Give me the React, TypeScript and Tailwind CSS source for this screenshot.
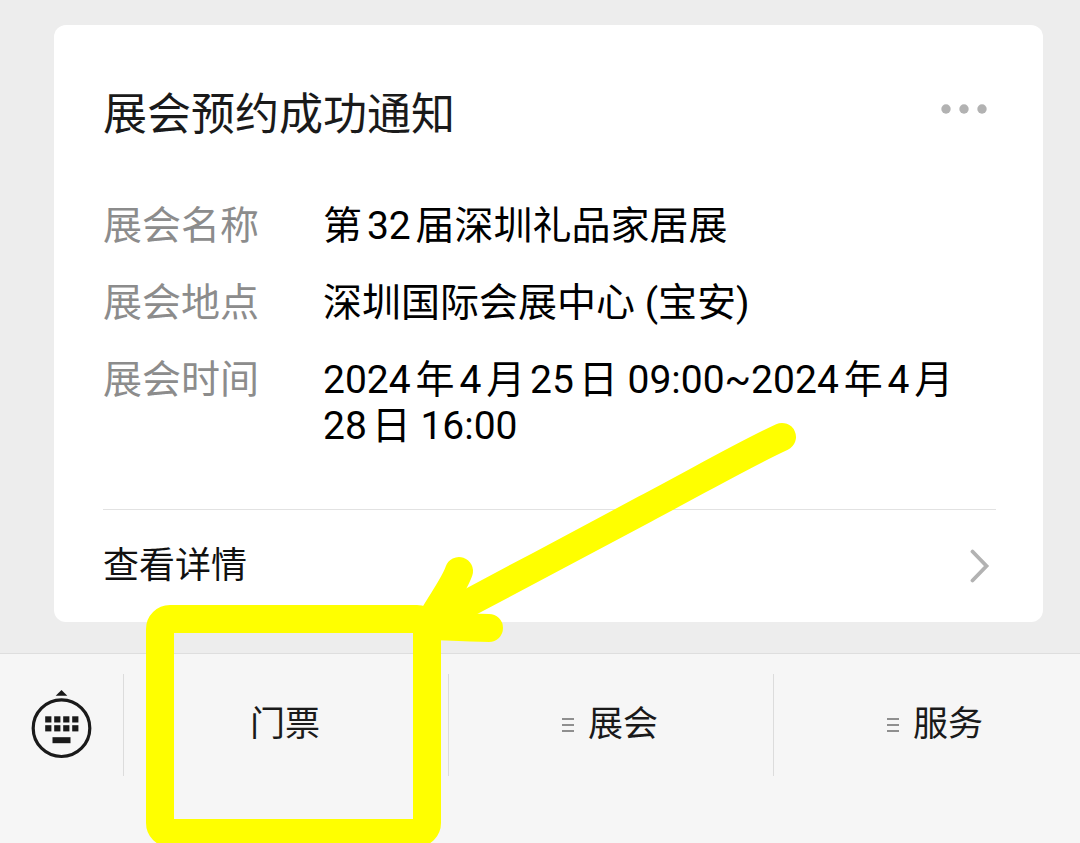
const details = [
  { label: "展会名称", value: "第32届深圳礼品家居展" },
  { label: "展会地点", value: "深圳国际会展中心 (宝安)" },
  { label: "展会时间", value: "2024年4月25日 09:00~2024年4月28日 16:00" },
];

const menus = [
  { name: "门票", hasSubmenu: false },
  { name: "展会", hasSubmenu: true },
  { name: "服务", hasSubmenu: true },
];

function MoreIcon() {
  return (
    <svg width="48" height="12" viewBox="0 0 48 12" fill="#b2b2b2" aria-hidden="true">
      <circle cx="6" cy="6" r="4.7" />
      <circle cx="24" cy="6" r="4.7" />
      <circle cx="42" cy="6" r="4.7" />
    </svg>
  );
}

function ChevronIcon() {
  return (
    <svg width="20" height="36" viewBox="0 0 20 36" fill="none" stroke="#b2b2b2" strokeWidth="3.8" strokeLinecap="round" aria-hidden="true">
      <path d="M2.5 3.5 L16.5 18 L2.5 32.5" />
    </svg>
  );
}

function KeyboardIcon() {
  return (
    <svg width="62" height="70" viewBox="0 0 62 70" fill="#1a1a1a" aria-hidden="true">
      <path d="M30.5 0 L36.3 5.7 H24.7 Z" />
      <circle cx="30.5" cy="38.2" r="28.3" fill="none" stroke="#1a1a1a" strokeWidth="3.2" />
      {[14.2, 23.2, 32.2, 41.2].map((x) => (
        <g key={x}>
          <rect x={x} y="26.3" width="6.2" height="6.2" />
          <rect x={x} y="35.2" width="6.2" height="6.2" />
        </g>
      ))}
      <rect x="21.5" y="47.2" width="18" height="6" />
    </svg>
  );
}

function SubmenuIcon() {
  return (
    <svg width="12" height="16" viewBox="0 0 12 16" stroke="#6e6e6e" strokeWidth="1.4" aria-hidden="true">
      <path d="M0 2 H12 M0 8 H12 M0 14 H12" />
    </svg>
  );
}

function Annotation() {
  return (
    <svg
      className="pointer-events-none absolute top-0 left-0"
      width="1080"
      height="843"
      viewBox="0 0 1080 843"
      fill="none"
      stroke="#ffff00"
      strokeWidth="28"
      strokeLinecap="round"
      strokeLinejoin="round"
      aria-hidden="true"
    >
      <rect x="160" y="619" width="267" height="214" rx="10" />
      <path d="M782 437 C 745 454 700 480 645 509 L 540 565 L 474 600 L 436 620" />
      <path d="M459 571 C 455 583 446 595 434 615" />
      <path d="M489 628 C 470 628 455 627 434 626" />
    </svg>
  );
}

export default function App() {
  return (
    <div
      lang="zh-CN"
      className="relative flex min-h-screen flex-col overflow-hidden bg-[#ededed] font-['Roboto','Noto_Sans_CJK_SC',sans-serif]"
    >
      <main className="pt-[25px] pr-[37px] pb-[31px] pl-[54px]">
        <article className="rounded-xl bg-white pr-[47px] pl-[49px]">
          <header className="flex items-start justify-between pt-[60px] pr-2">
            <h1 className="text-[44px] leading-[60px] text-[#1a1a1a]">展会预约成功通知</h1>
            <button type="button" aria-label="更多" className="pt-[18px]">
              <MoreIcon />
            </button>
          </header>
          <dl className="flex flex-col gap-[31px] pt-[58px] pb-[60px] text-[39px] leading-[46px] [text-autospace:normal]">
            {details.map((item) => (
              <div key={item.label} className="flex">
                <dt className="w-[220px] shrink-0 text-[#8c8c8c]">{item.label}</dt>
                <dd className="min-w-0 flex-1 text-black">{item.value}</dd>
              </div>
            ))}
          </dl>
          <a
            href="#details"
            className="flex items-center justify-between border-t border-[#e2e2e2] pt-[28px] pr-[6px] pb-[28px] text-[36px] leading-[56px] text-[#111111]"
          >
            查看详情
            <ChevronIcon />
          </a>
        </article>
      </main>
      <nav className="-mr-[18px] flex flex-1 items-start border-t border-[#dedede] bg-[#f6f6f6] pt-5">
        <button type="button" aria-label="键盘" className="flex h-[102px] w-[123px] shrink-0 items-center justify-center">
          <KeyboardIcon />
        </button>
        {menus.map((menu) => (
          <button
            key={menu.name}
            type="button"
            className="flex h-[102px] flex-1 items-center justify-center gap-[14px] border-l border-[#dcdcdc] pr-[2px] text-[35px] leading-[48px] text-[#1a1a1a]"
          >
            {menu.hasSubmenu && <SubmenuIcon />}
            <span>{menu.name}</span>
          </button>
        ))}
      </nav>
      <Annotation />
    </div>
  );
}
